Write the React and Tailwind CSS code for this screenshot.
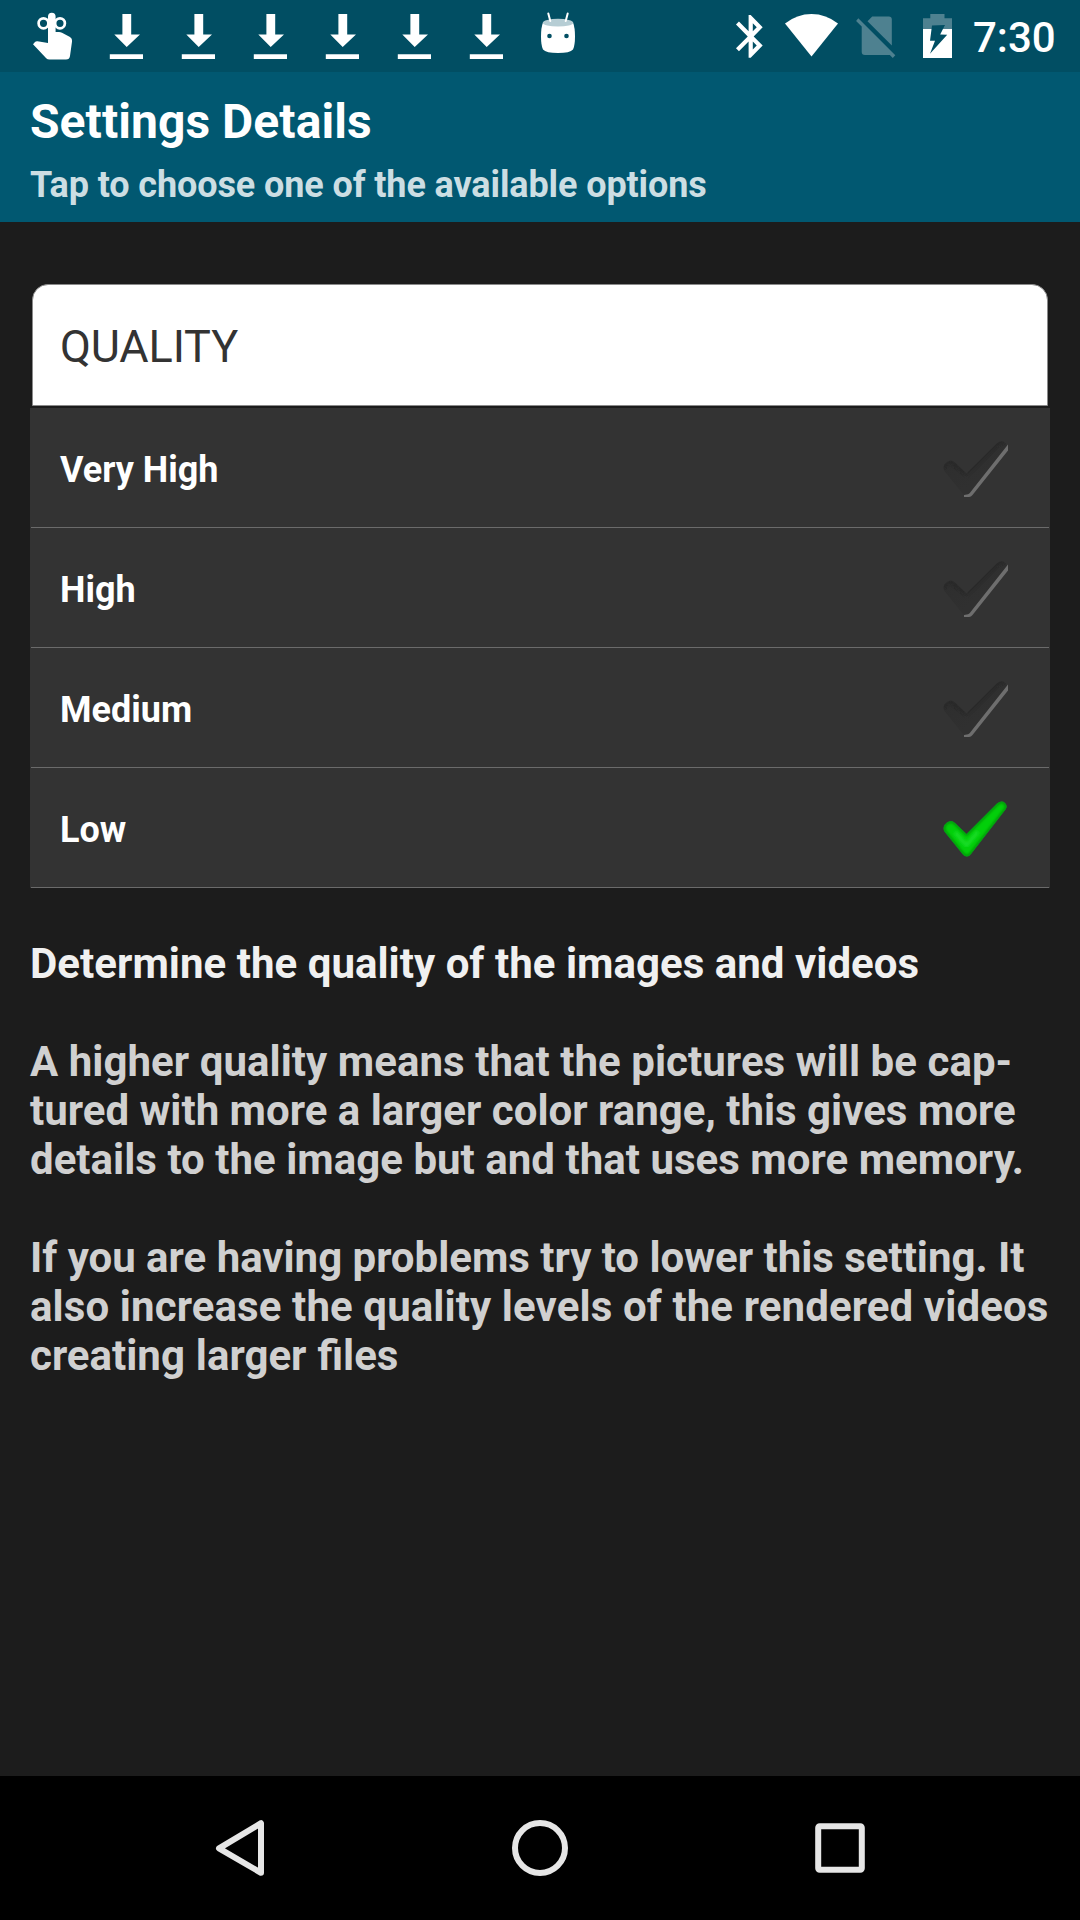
const DOWNLOADS = [0, 1, 2, 3, 4, 5];

const OPTIONS = [
  { label: 'Very High', selected: false },
  { label: 'High', selected: false },
  { label: 'Medium', selected: false },
  { label: 'Low', selected: true },
];

function ReminderIcon() {
  return (
    <svg width="72" height="72" viewBox="18 0 72 72" fill="none">
      <ellipse cx="43.500" cy="23.300" rx="4.900" ry="5" stroke="#fff" strokeWidth="2.700" />
      <ellipse cx="60" cy="23.300" rx="4.900" ry="5" stroke="#fff" strokeWidth="2.700" />
      <path
        d="M48 16.500a3.800 3.800 0 0 1 7.600 0V32H59q1.500 0 3 .8L70 37q2.300 1.300 2.100 4L70 56q-.5 3.600-4 3.600H49.500q-2 0-3.300-1.300L33 44.200l2-2.200q1-1 2.500-.8L48 43z"
        fill="#fff"
      />
    </svg>
  );
}

function DownloadIcon() {
  return (
    <svg width="72" height="72" viewBox="0 0 72 72" fill="#fff">
      <path d="M32.400 14h8.800v20.400H50L36.700 47 24.300 34.400h8.100z" />
      <path d="M19.800 54.200H53V59H19.800z" />
    </svg>
  );
}

function RobotIcon() {
  return (
    <svg width="72" height="72" viewBox="522 0 72 72" fill="none">
      <path
        d="M543 22.500h30q2 5 2 14t-2 13q-3 3.500-15 3.500t-15-3.500q-2-4-2-13t2-14z"
        fill="#fff"
      />
      <ellipse cx="558" cy="22.700" rx="15.200" ry="3.900" fill="#b6cdd4" />
      <path d="M548.300 13.500l2 7.500M567.700 13.500l-2 7.500" stroke="#fff" strokeWidth="2" strokeLinecap="round" />
      <circle cx="549.500" cy="36" r="2.300" fill="#014e63" />
      <circle cx="566.500" cy="36" r="2.300" fill="#014e63" />
    </svg>
  );
}

function BluetoothIcon() {
  return (
    <svg width="45" height="72" viewBox="730 0 45 72" fill="#fff">
      <path
        transform="translate(725.500 10.700) scale(2.100 2.140)"
        d="M17.710 7.710L12 2h-1v7.590L6.410 5 5 6.410 10.590 12 5 17.590 6.410 19 11 14.410V22h1l5.710-5.710-4.300-4.290 4.300-4.290zM13 5.830l1.880 1.880L13 9.590V5.830zm1.880 10.460L13 18.170v-3.760l1.880 1.880z"
      />
    </svg>
  );
}

function WifiIcon() {
  return (
    <svg width="73" height="72" viewBox="775 0 73 72" fill="#fff">
      <path d="M811.500 56.500L785 23.500Q797 14 811.500 14T838 23.500z" />
    </svg>
  );
}

function NoSimIcon() {
  return (
    <svg width="62" height="72" viewBox="848 0 62 72" fill="#4e8190">
      <path d="M867.500 21.200l4.700-4.700h16.600q3 0 3 3v26z" />
      <path d="M858.300 18.300l37 37-2.500 2.600-3-3q-.6.100-1.300.1h-23.600q-3.200 0-3.200-3.200V26.600l-5.600-5.600z" />
    </svg>
  );
}

function BatteryIcon() {
  return (
    <svg width="60" height="72" viewBox="910 0 60 72">
      <path d="M930.300 14h14.200v4.300h7.500V29h-29V18.300h7.300z" fill="#4e8190" />
      <path d="M923 29h29v29h-29z" fill="#fff" />
      <path d="M932 25.500l13-.5-4.800 9.500 7 .2L930 53.700l5-13h-5z" fill="#014e63" />
    </svg>
  );
}

const CHECK_SHAPE =
  'M2.500 24.500Q5 21 8.500 20.500Q11 20.500 13 22.500L24.500 33.500L55 3.200Q59.500 -.5 63 2.500Q66 5.500 63.500 9.200L29 53.500Q27 56 25 56Q22.500 56 20.500 53.500L2.800 31.500Q.5 28.500 2.500 24.500z';

function CheckIcon({ selected }) {
  if (selected) {
    return (
      <svg width="66" height="60" viewBox="0 0 66 60" fill="none">
        <defs>
          <clipPath id="check-clip">
            <path d={CHECK_SHAPE} />
          </clipPath>
          <filter id="check-glow">
            <feGaussianBlur stdDeviation="1.500" />
          </filter>
        </defs>
        <g transform="translate(0 -.6)">
          <path d={CHECK_SHAPE} fill="#02d00a" />
          <g clipPath="url(#check-clip)">
            <path d={CHECK_SHAPE} stroke="#048c08" strokeWidth="3" filter="url(#check-glow)" />
            <path d="M13 32l11.500 13L36 31" stroke="#18dc26" strokeWidth="4" filter="url(#check-glow)" />
          </g>
        </g>
      </svg>
    );
  }
  return (
    <svg width="66" height="60" viewBox="0 0 66 60" fill="none">
      <defs>
        <linearGradient id="check-off" x1="10" y1="15" x2="32" y2="42" gradientUnits="userSpaceOnUse">
          <stop offset="0" stopColor="#2e2e2e" />
          <stop offset="1" stopColor="#303030" />
        </linearGradient>
        <clipPath id="off-clip">
          <path d={CHECK_SHAPE} />
        </clipPath>
        <filter id="off-soft">
          <feGaussianBlur stdDeviation="1.200" />
        </filter>
      </defs>
      <path d={CHECK_SHAPE} fill="url(#check-off)" />
      <g clipPath="url(#off-clip)">
        <path d="M1 27L8.500 21L24.500 34L55 4L62 1" stroke="#292929" strokeWidth="4" filter="url(#off-soft)" />
      </g>
      <path d="M66 4.500v6L30.500 55Q29 57 27 57h-5v-2l4-.8q1-.3 2-1.500z" fill="#6e6e6e" />
    </svg>
  );
}

function StatusBar() {
  return (
    <div className="flex h-[72px] justify-between bg-[#014e63] pl-[18px]">
      <div className="flex">
        <ReminderIcon />
        {DOWNLOADS.map((id) => (
          <DownloadIcon key={id} />
        ))}
        <RobotIcon />
      </div>
      <div className="flex">
        <BluetoothIcon />
        <WifiIcon />
        <NoSimIcon />
        <BatteryIcon />
        <span className="w-[110px] pl-[3px] text-[42px] leading-[75px] font-medium text-white">7:30</span>
      </div>
    </div>
  );
}

function OptionRow({ label, selected }) {
  return (
    <li className="flex h-[120px] flex-col bg-[#333333]">
      <div className="flex h-[119px] items-start justify-between pr-[42px] pl-[30px]">
        <span className="pt-[41px] text-[36px] leading-[42px] font-bold text-white">{label}</span>
        <div className={selected ? 'pt-[33px]' : 'pt-[32px]'}>
          <CheckIcon selected={selected} />
        </div>
      </div>
      <div className="mx-px h-px bg-[#6b6b6b]" />
    </li>
  );
}

function NavBar() {
  return (
    <nav className="flex h-[144px] items-center justify-between bg-black px-[210px]">
      <svg width="60" height="60" viewBox="210 1818 60 60" fill="none" stroke="#e6e6e6" strokeWidth="6" strokeLinejoin="round">
        <path d="M261 1823.200v49.600L219 1848.300z" />
      </svg>
      <svg width="60" height="60" viewBox="0 0 60 60" fill="none" stroke="#e6e6e6" strokeWidth="6">
        <circle cx="30" cy="30" r="25" />
      </svg>
      <svg width="60" height="60" viewBox="0 0 60 60" fill="none" stroke="#e6e6e6" strokeWidth="6">
        <rect x="8.200" y="8.200" width="43.600" height="43.600" rx="1.500" />
      </svg>
    </nav>
  );
}

export default function App() {
  return (
    <div className="flex h-[1920px] w-[1080px] flex-col overflow-hidden bg-[#1c1c1c] font-['Roboto',sans-serif]">
      <StatusBar />
      <header className="h-[150px] bg-[#015871] px-[30px] pt-[22px]">
        <h1 className="text-[48px] leading-[56px] font-bold tracking-[0.06px] text-white">Settings Details</h1>
        <p className="mt-[14px] text-[36px] leading-[42px] font-bold tracking-[-0.11px] text-[#ccdee3]">
          Tap to choose one of the available options
        </p>
      </header>
      <main className="flex-1 px-[30px] pt-[62px]">
        <div className="mx-[2px] h-[122px] rounded-t-[16px] border border-[#8a8a8a] bg-white pt-[35px] pl-[27px]">
          <h2 className="text-[45px] leading-[53px] tracking-[-0.15px] text-[#333333]">QUALITY</h2>
        </div>
        <ul className="mt-[2px]">
          {OPTIONS.map((option) => (
            <OptionRow key={option.label} label={option.label} selected={option.selected} />
          ))}
        </ul>
        <section className="pt-[51px] text-[42px] leading-[49px] font-bold whitespace-nowrap text-[#d0d0d0]">
          <h3 className="tracking-[0.03px] text-[#f0f0f0]">Determine the quality of the images and videos</h3>
          <p className="mt-[49px]">
            <span className="tracking-[0.045px]">A higher quality means that the pictures will be cap-</span>
            <br />
            tured with more a larger color range, this gives more
            <br />
            <span className="tracking-[0.02px]">details to the image but and that uses more memory.</span>
          </p>
          <p className="mt-[49px]">
            <span className="tracking-[-0.02px]">If you are having problems try to lower this setting. It</span>
            <br />
            <span className="tracking-[0.1px]">also increase the quality levels of the rendered videos</span>
            <br />
            <span className="[word-spacing:0.5px]">creating larger files</span>
          </p>
        </section>
      </main>
      <NavBar />
    </div>
  );
}
